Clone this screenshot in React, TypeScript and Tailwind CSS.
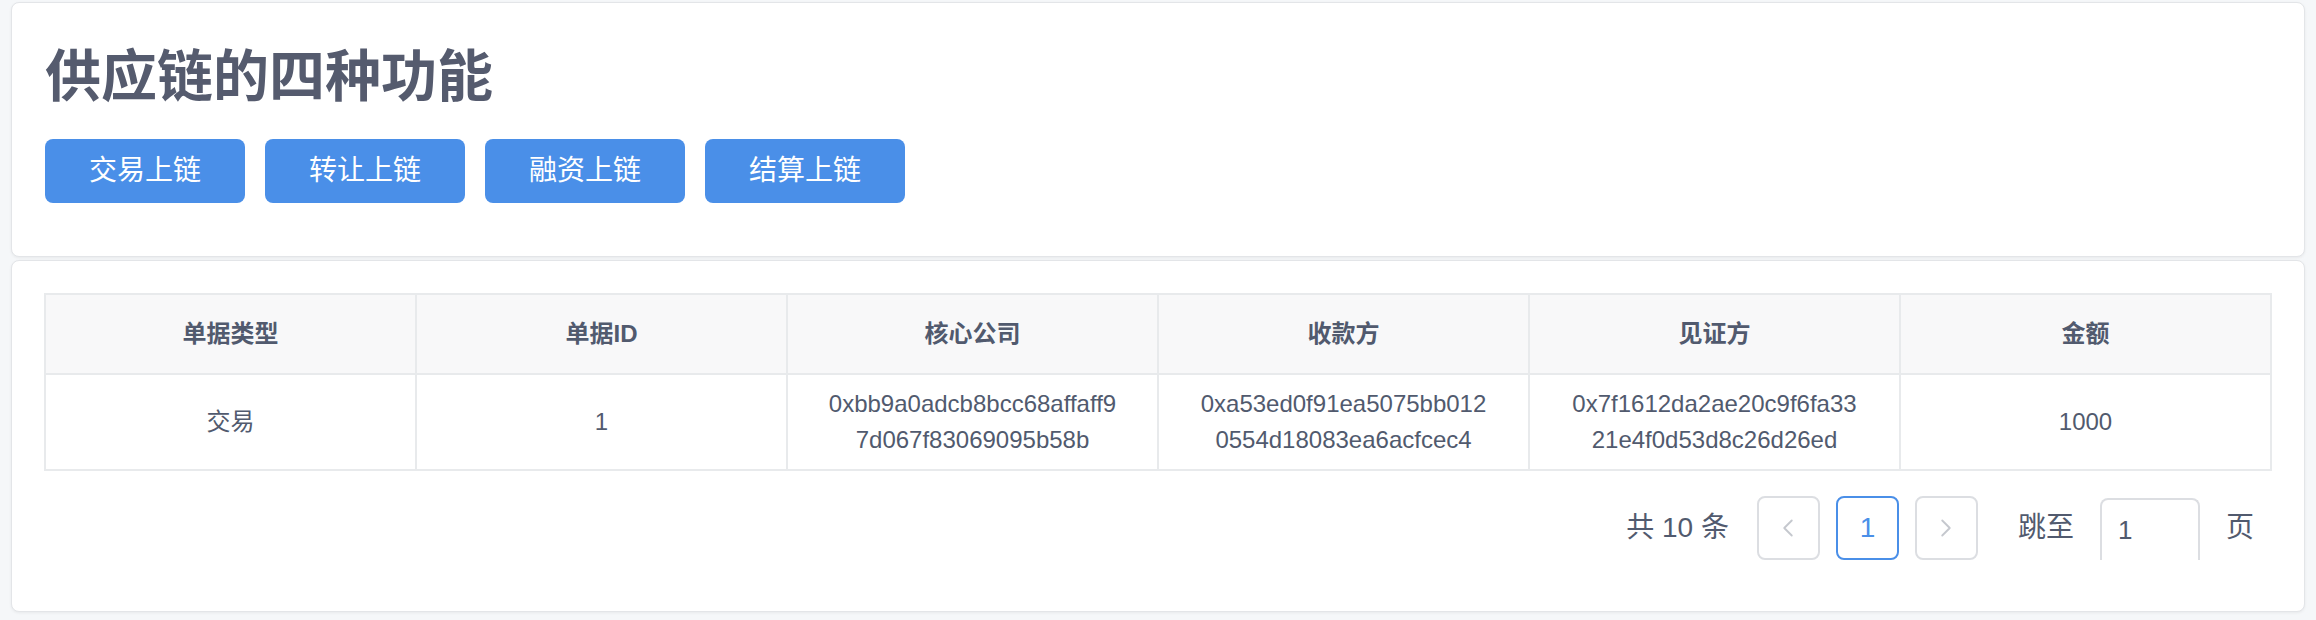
import { ChevronLeft, ChevronRight } from 'lucide-react';

const columns = ['单据类型', '单据ID', '核心公司', '收款方', '见证方', '金额'];

const rows = [
  {
    type: '交易',
    id: '1',
    core: ['0xbb9a0adcb8bcc68affaff9', '7d067f83069095b58b'],
    payee: ['0xa53ed0f91ea5075bb012', '0554d18083ea6acfcec4'],
    witness: ['0x7f1612da2ae20c9f6fa33', '21e4f0d53d8c26d26ed'],
    amount: '1000',
  },
];

const actions = ['交易上链', '转让上链', '融资上链', '结算上链'];

function Lines({ lines }: { lines: string[] }) {
  return (
    <>
      {lines.map((l) => (
        <span key={l} className="block">
          {l}
        </span>
      ))}
    </>
  );
}

export default function App() {
  return (
    <div className="min-h-[620px] bg-[#f5f7f9] px-[11px] pt-[2px] font-['Liberation_Sans','Noto_Sans_CJK_SC',sans-serif] text-[#515a6e]">
      {/* 功能区 */}
      <div className="h-[255px] rounded-lg border border-[#e3e5e8] bg-white pl-[33px] pt-[46px] shadow-[0_1px_3px_rgba(0,0,0,0.06)]">
        <h1 className="text-[56px] font-bold leading-none text-[#555b6e]">供应链的四种功能</h1>
        <div className="mt-[34px] flex gap-5">
          {actions.map((a) => (
            <button
              key={a}
              className="h-16 w-[200px] rounded-lg bg-[#4a8fe8] text-[28px] text-white"
            >
              {a}
            </button>
          ))}
        </div>
      </div>

      {/* 列表 */}
      <div className="mt-[3px] rounded-lg border border-[#e3e5e8] bg-white px-8 pt-8 pb-[51px] shadow-[0_1px_3px_rgba(0,0,0,0.06)]">
        <table className="w-full table-fixed border-collapse border-2 border-[#dcdee2] text-[24px] leading-[36px]">
          <thead>
            <tr className="h-[80px] bg-[#f8f8f9]">
              {columns.map((c) => (
                <th key={c} className="border-2 border-[#e8eaec] px-[36px] text-center font-bold">
                  {c}
                </th>
              ))}
            </tr>
          </thead>
          <tbody>
            {rows.map((r) => (
              <tr key={r.id} className="h-[96px]">
                <td className="border-2 border-[#e8eaec] px-[18px] text-center">{r.type}</td>
                <td className="border-2 border-[#e8eaec] px-[18px] text-center">{r.id}</td>
                <td className="border-2 border-[#e8eaec] px-[18px] text-center">
                  <Lines lines={r.core} />
                </td>
                <td className="border-2 border-[#e8eaec] px-[18px] text-center">
                  <Lines lines={r.payee} />
                </td>
                <td className="border-2 border-[#e8eaec] px-[18px] text-center">
                  <Lines lines={r.witness} />
                </td>
                <td className="border-2 border-[#e8eaec] px-[18px] text-center">{r.amount}</td>
              </tr>
            ))}
          </tbody>
        </table>

        {/* 分页 */}
        <div className="mt-[25px] flex items-center justify-end pr-[18px] text-[28px]">
          <span className="mr-[28px]">共 10 条</span>
          <div className="flex gap-4">
            <div className="flex h-16 w-[63px] items-center justify-center rounded-lg border-2 border-[#dcdee2] text-[#c5c8ce]">
              <ChevronLeft size={30} strokeWidth={1.5} />
            </div>
            <div className="flex h-16 w-[63px] items-center justify-center rounded-lg border-2 border-[#4a8fe8] text-[#4a8fe8]">
              1
            </div>
            <div className="flex h-16 w-[63px] items-center justify-center rounded-lg border-2 border-[#dcdee2] text-[#c5c8ce]">
              <ChevronRight size={30} strokeWidth={1.5} />
            </div>
          </div>
          <span className="ml-[40px]">跳至</span>
          <div className="ml-[26px] mt-[2px] flex h-[62px] w-[100px] items-center rounded-t-lg border-2 border-b-0 border-[#dcdee2] pl-[16px] text-[26px]">
            1
          </div>
          <span className="ml-[26px]">页</span>
        </div>
      </div>
    </div>
  );
}
